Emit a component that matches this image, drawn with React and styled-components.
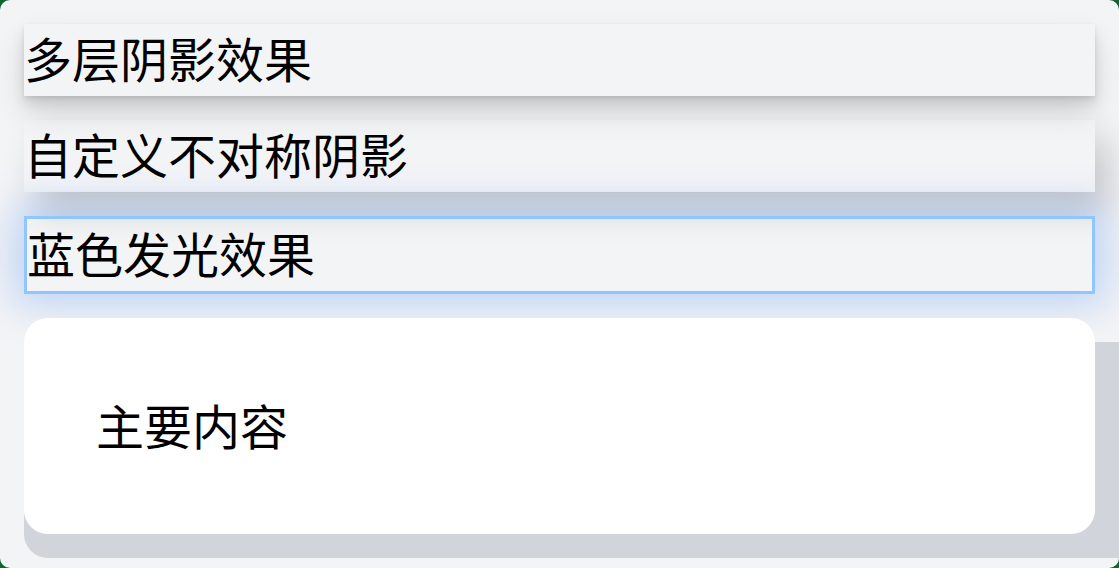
import React from "react";
import styled, { createGlobalStyle } from "styled-components";

const Global = createGlobalStyle`
  html, body { margin: 0; padding: 0; background: #0b6630; }
  body { font-family: "Noto Sans CJK SC", "Noto Sans", sans-serif; }
`;

const Panel = styled.div`
  box-sizing: border-box;
  width: 1119px;
  min-height: 568px;
  background: #f3f4f6;
  border-radius: 10px;
  padding: 24px;
  display: flex;
  flex-direction: column;
  gap: 24px;
  overflow: hidden;
`;

const shadows = {
  layered:
    "0 2px 4px rgba(0,0,0,0.08), 0 8px 12px rgba(0,0,0,0.1), 0 16px 32px rgba(0,0,0,0.12)",
  asym: "14px 18px 34px rgba(0,0,0,0.18)",
  glow: "0 0 40px 10px rgba(59,130,246,0.3)",
};

const Item = styled.div`
  box-sizing: border-box;
  height: ${(p) => (p.$glow ? 78 : 72)}px;
  font-size: 48px;
  line-height: 66px;
  padding-bottom: 6px;
  color: #000;
  border: ${(p) => (p.$glow ? "3px solid #93c5fd" : "none")};
  box-shadow: ${(p) => shadows[p.$kind]};
  white-space: nowrap;
`;

const Card = styled.div`
  box-sizing: border-box;
  height: 216px;
  background: #fff;
  border-radius: 24px;
  padding: 70px 72px 0;
  box-shadow: 0 24px 0 #d1d5db, 48px 24px 0 #d1d5db;
  font-size: 48px;
  line-height: 72px;
  color: #000;
`;

export default function App() {
  return (
    <>
      <Global />
      <Panel>
        <Item $kind="layered">多层阴影效果</Item>
        <Item $kind="asym">自定义不对称阴影</Item>
        <Item $kind="glow" $glow>蓝色发光效果</Item>
        <Card>主要内容</Card>
      </Panel>
    </>
  );
}
